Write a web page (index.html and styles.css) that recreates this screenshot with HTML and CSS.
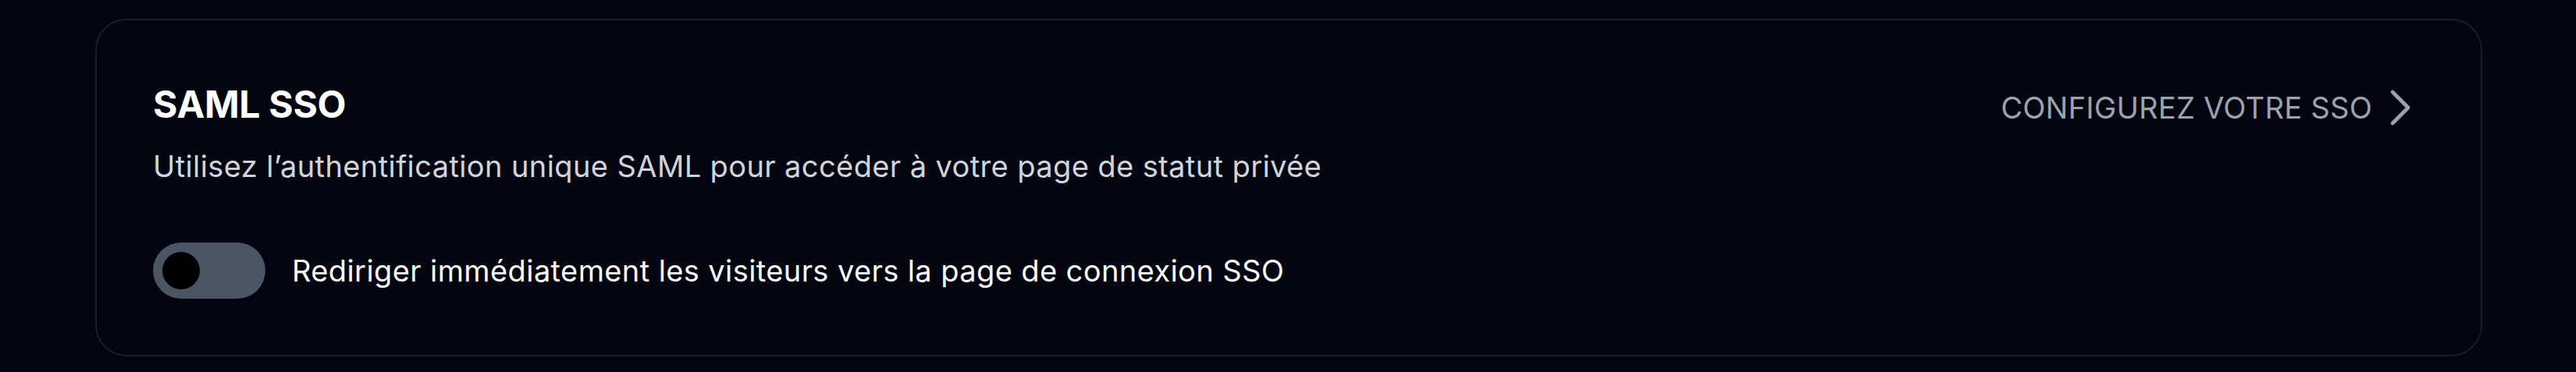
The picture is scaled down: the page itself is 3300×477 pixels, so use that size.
FILE: index.html
```html
<!DOCTYPE html>
<html lang="fr">
<head>
    <meta charset="UTF-8">
    <meta name="viewport" content="width=device-width, initial-scale=1.0">
    <title>SAML SSO</title>
    <link rel="stylesheet" href="styles.css">
</head>
<body>
    <!-- Carte de réglage SSO -->
    <section class="sso-card">
        <div class="sso-header">
            <div class="sso-text">
                <h2>SAML SSO</h2>
                <p>Utilisez l’authentification unique SAML pour accéder à votre page de statut privée</p>
            </div>
            <a class="sso-link" href="#">
                CONFIGUREZ VOTRE SSO
                <svg viewBox="0 0 24 24" fill="none" stroke="currentColor" stroke-width="1.75" stroke-linecap="round" stroke-linejoin="round">
                    <path d="M8.25 4.5l7.5 7.5-7.5 7.5"/>
                </svg>
            </a>
        </div>

        <label class="toggle-row">
            <span class="toggle"><span class="knob"></span></span>
            <span class="toggle-label">Rediriger immédiatement les visiteurs vers la page de connexion SSO</span>
        </label>
    </section>
</body>
</html>
```

FILE: styles.css
```css
/* Styles généraux */
body {
    margin: 0;
    padding: 24px 120px 24px 122px;
    background-color: #030610;
    font-family: 'Inter', 'Noto Sans', sans-serif;
    color: #f9fafb;
}

/* Carte */
.sso-card {
    border: 2px solid #181e2b;
    border-radius: 40px;
    background-color: #030610;
    padding: 72px 71px 72px 72px;
}

.sso-header {
    display: flex;
    justify-content: space-between;
    align-items: flex-start;
}

.sso-text h2 {
    margin: 0;
    font-size: 48px;
    line-height: 72px;
    font-weight: 700;
    letter-spacing: -0.3px;
    color: #ffffff;
}

.sso-text p {
    margin: 16px 0 0;
    font-size: 38px;
    line-height: 54px;
    letter-spacing: 0.4px;
    color: #d1d5db;
}

/* Lien de configuration */
.sso-link {
    display: flex;
    align-items: center;
    gap: 4px;
    margin-top: 8px;
    font-size: 38px;
    line-height: 54px;
    letter-spacing: 0.3px;
    color: #9ca3af;
    text-decoration: none;
}

.sso-link svg {
    width: 64px;
    height: 64px;
}

/* Interrupteur */
.toggle-row {
    display: flex;
    align-items: center;
    gap: 34px;
    margin-top: 71px;
}

.toggle {
    display: flex;
    align-items: center;
    width: 144px;
    height: 72px;
    padding: 0 12px;
    box-sizing: border-box;
    border-radius: 36px;
    background-color: #4b5563;
}

.knob {
    width: 48px;
    height: 48px;
    border-radius: 50%;
    background-color: #000000;
}

.toggle-label {
    font-size: 38px;
    line-height: 54px;
    letter-spacing: 0.4px;
    color: #f9fafb;
}
```
